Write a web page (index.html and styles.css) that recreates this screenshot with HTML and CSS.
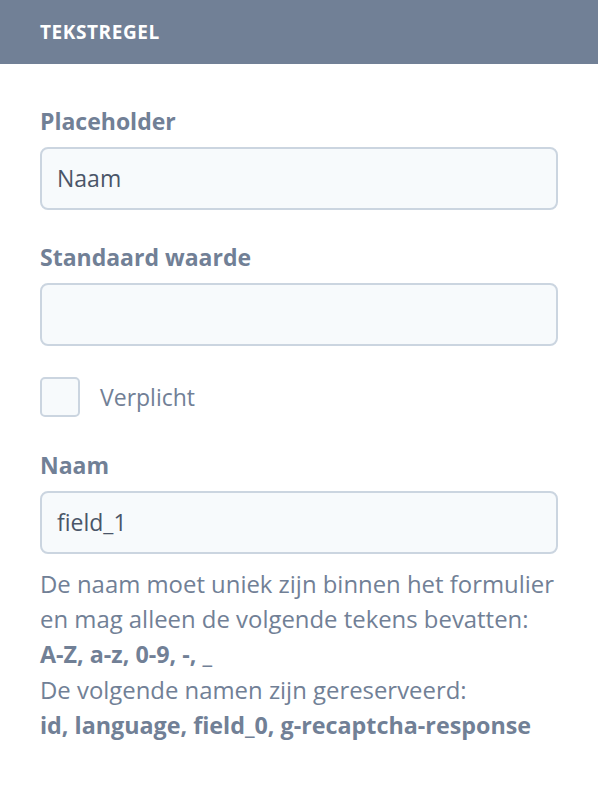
FILE: index.html
```html
<!DOCTYPE html>
<html lang="nl">
<head>
<meta charset="utf-8">
<title>Tekstregel</title>
<link rel="stylesheet" href="styles.css">
</head>
<body>
<div class="panel">
  <div class="panel-header">Tekstregel</div>
  <div class="panel-body">
    <div class="field">
      <label class="label">Placeholder</label>
      <div class="input">Naam</div>
    </div>
    <div class="field">
      <label class="label">Standaard waarde</label>
      <div class="input"></div>
    </div>
    <div class="field check-row">
      <span class="checkbox"></span>
      <span class="check-label">Verplicht</span>
    </div>
    <div class="field">
      <label class="label">Naam</label>
      <div class="input">field_1</div>
      <div class="help">
        De naam moet uniek zijn binnen het formulier<br>
        en mag alleen de volgende tekens bevatten:<br>
        <strong>A-Z, a-z, 0-9, -, _</strong><br>
        De volgende namen zijn gereserveerd:<br>
        <strong>id, language, field_0, g-recaptcha-response</strong>
      </div>
    </div>
  </div>
</div>
</body>
</html>
```

FILE: styles.css
```css
* { box-sizing: border-box; }
html, body { margin: 0; padding: 0; background: #fff; }
body {
  font-family: "Open Sans", "Noto Sans", sans-serif;
  width: 598px;
}
.panel-header {
  height: 64px;
  background: #718096;
  color: #fff;
  font-weight: 700;
  font-size: 19px;
  text-transform: uppercase;
  letter-spacing: 0.03em;
  display: flex;
  align-items: center;
  padding-left: 40px;
}
.panel-body {
  padding: 40px 40px 20px;
}
.field {
  margin-bottom: 31px;
}
.label {
  display: block;
  font-size: 23px;
  line-height: 35px;
  font-weight: 700;
  color: #718096;
  margin-bottom: 8px;
  margin-top: -0.5px;
}
.input {
  height: 63px;
  border: 2px solid #cbd5e0;
  border-radius: 8px;
  background: #f7fafc;
  color: #4a5568;
  font-size: 23px;
  padding: 0 15px;
  display: flex;
  align-items: center;
}
.check-row {
  display: flex;
  align-items: center;
  gap: 20px;
}
.checkbox {
  width: 40px;
  height: 40px;
  border: 2px solid #cbd5e0;
  border-radius: 5px;
  background: #f7fafc;
}
.check-label {
  font-size: 23px;
  color: #718096;
}
.help {
  margin-top: 12px;
  font-size: 23.9px;
  line-height: 35px;
  color: #718096;
  white-space: nowrap;
}
.help strong {
  font-weight: 700;
  font-size: 23.3px;
}
```
